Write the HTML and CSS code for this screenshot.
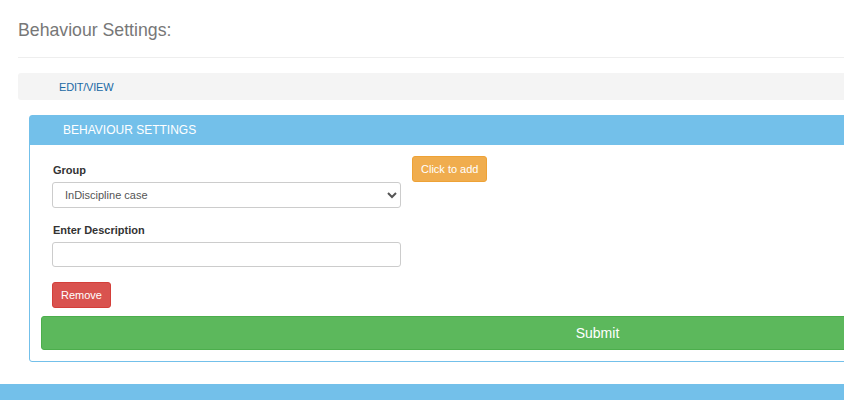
FILE: index.html
```html
<!DOCTYPE html>
<html lang="en">
  <head>
    <meta charset="UTF-8" />
    <meta name="viewport" content="width=device-width, initial-scale=1.0" />
    <title>Behaviour Settings</title>
    <link rel="stylesheet" href="styles.css">
  </head>
  <body>
    <div class="page">
      <h2 class="page-title">Behaviour Settings:</h2>

      <div class="tab-bar">
        <a class="tab-link" href="#">EDIT/VIEW</a>
      </div>

      <div class="panel">
        <div class="panel-heading">BEHAVIOUR SETTINGS</div>
        <div class="panel-body">
          <div class="form-row">
            <div class="form-col">
              <div class="form-group">
                <label class="form-label">Group</label>
                <select class="form-control">
                  <option>InDiscipline case</option>
                </select>
              </div>
              <div class="form-group">
                <label class="form-label">Enter Description</label>
                <input class="form-control" type="text" />
              </div>
              <button class="btn btn-danger">Remove</button>
            </div>
            <button class="btn btn-warning">Click to add</button>
          </div>
          <button class="btn btn-success btn-block">Submit</button>
        </div>
      </div>
    </div>

    <div class="footer-bar"></div>
  </body>
</html>
```

FILE: styles.css
```css
html,
body {
  margin: 0;
  padding: 0;
  overflow: hidden;
}
body {
  font-family: "Liberation Sans", Arial, sans-serif;
  color: #333;
  background: #fff;
  width: 1200px;
  height: 400px;
}
.page {
  padding: 0 0 0 18px;
  width: 1148px;
}
.page-title {
  margin: 0;
  padding: 19px 0 16px;
  font-size: 17.7px;
  font-weight: normal;
  line-height: 22px;
  color: #777;
  border-bottom: 1px solid #eee;
}
.tab-bar {
  margin-top: 15px;
  height: 27px;
  background: #f4f4f4;
  border-radius: 3px;
  display: flex;
  align-items: center;
  padding-left: 41px;
}
.tab-link {
  font-size: 11px;
  color: #1b6aa5;
  text-decoration: none;
  letter-spacing: -0.2px;
}
.panel {
  margin: 15px 0 0 11px;
  border: 1px solid #73c0ea;
  border-radius: 3px;
}
.panel-heading {
  background: #73c0ea;
  color: #fff;
  font-size: 12px;
  height: 29px;
  line-height: 28px;
  padding-left: 33px;
}
.panel-body {
  padding: 11px 11px 11px 11px;
}
.form-row {
  display: flex;
  align-items: flex-start;
  gap: 11px;
  padding-left: 11px;
}
.form-col {
  width: 349px;
  padding-top: 8px;
}
.form-group {
  margin-bottom: 15px;
}
.form-group + .form-group {
  margin-top: 16px;
}
.form-group:first-child {
  margin-bottom: 0;
}
.form-label {
  display: block;
  font-size: 11px;
  font-weight: bold;
  line-height: 13px;
  margin: 0 0 5px 1px;
  color: #333;
}
.form-control {
  display: block;
  box-sizing: border-box;
  width: 349px;
  height: 26px;
  border: 1px solid #ccc;
  border-radius: 3px;
  font-family: "Liberation Sans", Arial, sans-serif;
  font-size: 11px;
  color: #555;
  background: #fff;
  padding: 0 8px;
}
.form-group + .form-group .form-control {
  height: 25px;
}
.btn {
  box-sizing: border-box;
  font-family: "Liberation Sans", Arial, sans-serif;
  font-size: 11px;
  color: #fff;
  border: 1px solid transparent;
  border-radius: 3px;
  padding: 0 8px;
  height: 26px;
  cursor: pointer;
}
.btn-warning {
  background: #f0ad4e;
  border-color: #eea236;
}
.btn-danger {
  background: #d9534f;
  border-color: #d43f3a;
  width: 59px;
  padding: 0;
}
.btn-success {
  background: #5cb85c;
  border-color: #4cae4c;
}
.btn-block {
  display: block;
  width: 100%;
  height: 34px;
  margin-top: 8px;
  font-size: 14px;
}
.footer-bar {
  margin-top: 22px;
  height: 16px;
  background: #73c0ea;
}
```
